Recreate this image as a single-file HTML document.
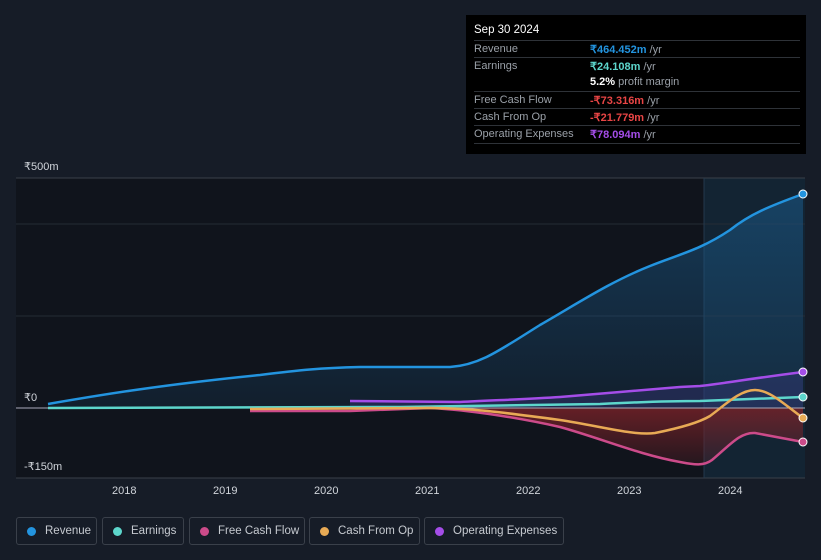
<!DOCTYPE html>
<html><head><style>
html,body{margin:0;width:821px;height:560px;overflow:hidden}
body{background:#161c27;font-family:"Liberation Sans",sans-serif;position:relative}
.tt{position:absolute;left:466px;top:15px;width:340px;height:139px;background:#000;color:#9aa0a8;font-size:11px}
.tt .h{position:absolute;left:8px;top:9px;color:#fff;font-size:11.5px}
.row{position:absolute;left:8px;width:326px;height:17px;border-top:1px solid #2e3238}
.row span{position:absolute;top:2px;white-space:nowrap}
.row .v{left:116px}
.row b{font-weight:bold}
.leg{position:absolute;top:517px;height:28px;border:1px solid #3a404a;border-radius:3px;color:#c6cad0;font-size:11.5px;line-height:26px;box-sizing:border-box;white-space:nowrap}
.leg i{position:absolute;left:10px;top:9px;width:9px;height:9px;border-radius:50%}
.leg span{position:absolute;left:28px}
.ax{position:absolute;color:#d0d4da;font-size:11px}
</style></head><body>
<svg width="821" height="560" style="position:absolute;left:0;top:0">
<defs>
<linearGradient id="rg" x1="0" y1="0" x2="0" y2="1"><stop offset="0" stop-color="#1b5a8a" stop-opacity=".55"/><stop offset="1" stop-color="#1b5a8a" stop-opacity=".15"/></linearGradient>
<linearGradient id="fg" x1="0" y1="0" x2="0" y2="1"><stop offset="0" stop-color="#7a2228" stop-opacity=".8"/><stop offset="1" stop-color="#7a2228" stop-opacity=".2"/></linearGradient>
</defs>
<rect x="16" y="178" width="789" height="300" fill="#10141c"/>
<rect x="704" y="178" width="101" height="300" fill="#14283a" opacity=".8"/>
<line x1="16" y1="178" x2="805" y2="178" stroke="#3a404a"/>
<line x1="16" y1="224" x2="805" y2="224" stroke="#252b35"/>
<line x1="16" y1="316" x2="805" y2="316" stroke="#252b35"/>
<line x1="16" y1="478" x2="805" y2="478" stroke="#3a404a"/>
<line x1="704" y1="178" x2="704" y2="478" stroke="#23384c"/>
<path d="M48,404 C100,395 160,385 260,375 C300,370 320,368 360,367 L450,367 C480,365 500,350 540,325 C580,302 610,282 650,266 C680,254 700,250 730,230 C750,214 770,206 803,194 L803,408 L48,408Z" fill="url(#rg)"/>
<path d="M250,410 L430,408 C470,410 520,418 560,427 C600,438 640,455 680,462 C695,465 704,466 712,460 C730,445 740,432 755,433 L803,442 L803,408 L250,408Z" fill="url(#fg)"/>
<path d="M350,401 L460,402 C500,400 530,399 560,397 C600,394 640,390 680,387 L700,386 C720,384 740,380 803,372 L803,408 L350,408Z" fill="#3a3a80" opacity=".4"/>
<line x1="16" y1="408" x2="805" y2="408" stroke="#aab" stroke-width="1"/>
<path d="M48,404 C100,395 160,385 260,375 C300,370 320,368 360,367 L450,367 C480,365 500,350 540,325 C580,302 610,282 650,266 C680,254 700,250 730,230 C750,214 770,206 803,194" fill="none" stroke="#2394df" stroke-width="2.5"/>
<path d="M48,408 L400,407 C500,406 560,405 600,404 C640,402 670,401 700,401 L803,397" fill="none" stroke="#5dd6cc" stroke-width="2.5"/>
<path d="M350,401 L460,402 C500,400 530,399 560,397 C600,394 640,390 680,387 L700,386 C720,384 740,380 803,372" fill="none" stroke="#a44de8" stroke-width="2.5"/>
<path d="M250,411 L350,411 L430,408 C470,410 520,418 560,427 C600,438 640,455 680,462 C695,465 704,466 712,460 C730,445 740,432 755,433 L803,442" fill="none" stroke="#cc4b8a" stroke-width="2.5"/>
<path d="M250,409 L430,408 C470,408 500,412 560,420 C600,426 635,436 655,433 C680,428 700,422 710,416 C725,405 740,390 755,390 C770,390 785,405 803,418" fill="none" stroke="#e8aa55" stroke-width="2.5"/>
<circle cx="803" cy="194" r="4" fill="#2394df" stroke="#fff" stroke-width="1"/>
<circle cx="803" cy="372" r="4" fill="#a44de8" stroke="#fff" stroke-width="1"/>
<circle cx="803" cy="397" r="4" fill="#5dd6cc" stroke="#fff" stroke-width="1"/>
<circle cx="803" cy="418" r="4" fill="#e8aa55" stroke="#fff" stroke-width="1"/>
<circle cx="803" cy="442" r="4" fill="#cc4b8a" stroke="#fff" stroke-width="1"/>
</svg>
<div class="ax" style="left:24px;top:160px">₹500m</div>
<div class="ax" style="left:24px;top:391px">₹0</div>
<div class="ax" style="left:24px;top:460px">-₹150m</div>
<div class="ax" style="left:112px;top:485px">2018</div>
<div class="ax" style="left:213px;top:485px">2019</div>
<div class="ax" style="left:314px;top:485px">2020</div>
<div class="ax" style="left:415px;top:485px">2021</div>
<div class="ax" style="left:516px;top:485px">2022</div>
<div class="ax" style="left:617px;top:485px">2023</div>
<div class="ax" style="left:718px;top:485px">2024</div>
<div class="tt">
<div class="h">Sep 30 2024</div>
<div class="row" style="top:25px"><span>Revenue</span><span class="v"><b style="color:#2394df">₹464.452m</b> /yr</span></div>
<div class="row" style="top:42px"><span>Earnings</span><span class="v"><b style="color:#5dd6cc">₹24.108m</b> /yr</span></div>
<div class="row" style="top:59px;border-top:none"><span class="v"><b style="color:#fff">5.2%</b> profit margin</span></div>
<div class="row" style="top:76px"><span>Free Cash Flow</span><span class="v"><b style="color:#e84545">-₹73.316m</b> /yr</span></div>
<div class="row" style="top:93px"><span>Cash From Op</span><span class="v"><b style="color:#e84545">-₹21.779m</b> /yr</span></div>
<div class="row" style="top:110px;border-bottom:1px solid #2e3238"><span>Operating Expenses</span><span class="v"><b style="color:#a44de8">₹78.094m</b> /yr</span></div>
</div>
<div class="leg" style="left:16px;width:81px"><i style="background:#2394df"></i><span>Revenue</span></div>
<div class="leg" style="left:102px;width:82px"><i style="background:#5dd6cc"></i><span>Earnings</span></div>
<div class="leg" style="left:189px;width:116px"><i style="background:#cc4b8a"></i><span>Free Cash Flow</span></div>
<div class="leg" style="left:309px;width:111px"><i style="background:#e8aa55"></i><span>Cash From Op</span></div>
<div class="leg" style="left:424px;width:140px"><i style="background:#a44de8"></i><span>Operating Expenses</span></div>
</body></html>
